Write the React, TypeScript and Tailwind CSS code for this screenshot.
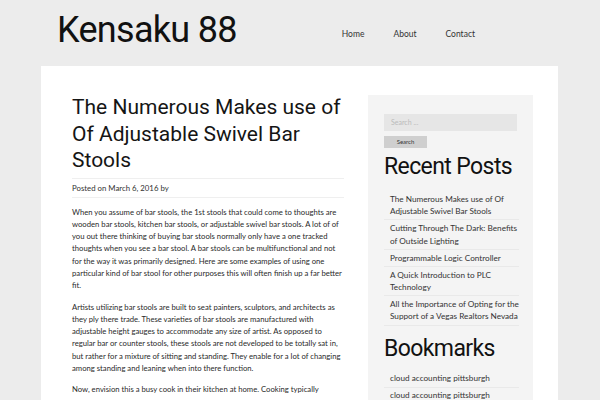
export default function App() {
  const recent = [
    "The Numerous Makes use of Of Adjustable Swivel Bar Stools",
    "Cutting Through The Dark: Benefits of Outside Lighting",
    "Programmable Logic Controller",
    "A Quick Introduction to PLC Technology",
    "All the Importance of Opting for the Support of a Vegas Realtors Nevada",
  ];
  const bookmarks = ["cloud accounting pittsburgh", "cloud accounting pittsburgh"];

  return (
    <div className="min-h-screen w-[600px] h-[400px] overflow-hidden bg-[#ececec] font-['Lato',sans-serif]">
      {/* header */}
      <header className="flex h-[66px] items-start pl-[57px]">
        <h1 className="mt-[8px] font-['Roboto',sans-serif] text-[36px] leading-[44px] tracking-[-0.7px] text-[#111]">
          Kensaku 88
        </h1>
        <nav className="ml-auto mr-[125px] mt-[28px] flex gap-[29px] text-[8.5px] text-[#333]">
          <a>Home</a>
          <a>About</a>
          <a>Contact</a>
        </nav>
      </header>

      {/* content box */}
      <div className="ml-[41px] flex w-[517px] bg-white pl-[31px] pr-[25px] pt-[28px]">
        <main className="w-[272px] shrink-0">
          <h2 className="font-['Roboto',sans-serif] text-[21px] leading-[26.5px] text-[#151515]">
            The Numerous Makes use of Of Adjustable Swivel Bar Stools
          </h2>
          <div className="mt-[4px] border-y border-[#efefef] py-[4px] text-[7.8px] leading-[10px] text-[#333]">
            Posted on March 6, 2016 by
          </div>
          <div className="mt-[8px] text-[7.7px] leading-[12.3px] text-[#2a2a2a]">
            <p>
              When you assume of bar stools, the 1st stools that could come to thoughts are wooden bar stools,
              kitchen bar stools, or adjustable swivel bar stools. A lot of of you out there thinking of buying bar
              stools normally only have a one tracked thoughts when you see a bar stool. A bar stools can be
              multifunctional and not for the way it was primarily designed. Here are some examples of using one
              particular kind of bar stool for other purposes this will often finish up a far better fit.
            </p>
            <p className="mt-[9px]">
              Artists utilizing bar stools are built to seat painters, sculptors, and architects as they ply there
              trade. These varieties of bar stools are manufactured with adjustable height gauges to accommodate any
              size of artist. As opposed to regular bar or counter stools, these stools are not developed to be
              totally sat in, but rather for a mixture of sitting and standing. They enable for a lot of changing
              among standing and leaning when into there function.
            </p>
            <p className="mt-[9px]">
              Now, envision this a busy cook in their kitchen at home. Cooking typically
            </p>
          </div>
        </main>

        <aside className="ml-[24px] mt-[1px] w-[165px] shrink-0 bg-[#f4f4f4] pl-[16px] pr-[14px] pt-[19px] pb-4">
          <div className="mr-[2px] h-[17px] bg-[#e6e6e6] pl-[7px] text-[7px] leading-[17px] text-[#bbb]">
            Search ...
          </div>
          <div className="mt-[5px] h-[12px] w-[43px] bg-[#cfcfcf] text-center text-[6px] leading-[12px] text-[#333]">
            Search
          </div>
          <h3 className="mt-[4px] whitespace-nowrap font-['Roboto',sans-serif] text-[23px] leading-[30px] tracking-[-0.6px] text-[#111]">
            Recent Posts
          </h3>
          <ul className="mt-[9px] text-[8.2px] leading-[12.4px] text-[#333]">
            {recent.map((r) => (
              <li key={r} className="border-b border-[#e9e9e9] py-[1.8px] pl-[6px]">
                {r}
              </li>
            ))}
          </ul>
          <h3 className="mt-[8px] whitespace-nowrap font-['Roboto',sans-serif] text-[23px] leading-[30px] tracking-[-0.6px] text-[#111]">
            Bookmarks
          </h3>
          <ul className="mt-[7px] text-[8.2px] leading-[12.4px] text-[#333]">
            {bookmarks.map((b, i) => (
              <li key={i} className="border-b border-[#e9e9e9] py-[1.8px] pl-[6px]">
                {b}
              </li>
            ))}
          </ul>
        </aside>
      </div>
    </div>
  );
}
